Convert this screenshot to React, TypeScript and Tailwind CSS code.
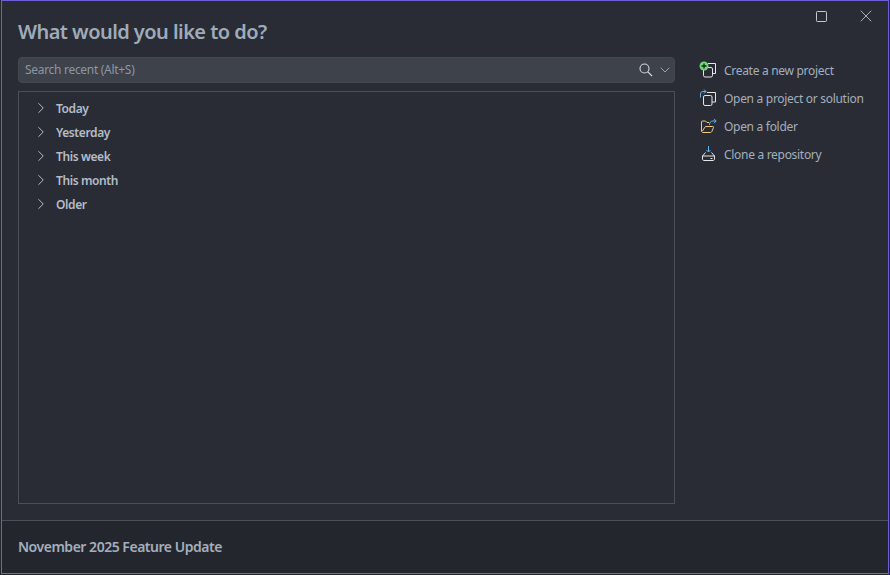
import React from "react";
import { ChevronRight, ChevronDown, X } from "lucide-react";

const groups = ["Today", "Yesterday", "This week", "This month", "Older"];

function NewIcon() {
  return (
    <svg width="20" height="20" viewBox="0 0 20 20" fill="none">
      <path d="M9 2.500h7.500v10H13.500" stroke="#e4e6e8" />
      <rect x="4.500" y="6.500" width="9" height="9.500" rx="1.500" stroke="#e4e6e8" />
      <circle cx="5" cy="5" r="4.500" fill="#6fd97a" />
      <path d="M5 2.500v5M2.500 5h5" stroke="#14241a" strokeWidth="1.300" />
    </svg>
  );
}
function OpenIcon() {
  return (
    <svg width="20" height="20" viewBox="0 0 20 20" fill="none">
      <path d="M8 3.500h8.500v9.500H13" stroke="#e4e6e8" />
      <rect x="4.500" y="6.500" width="8.500" height="10" rx="1.500" stroke="#e4e6e8" />
      <path d="M1.500 8.500V5c0-1.500 1-2.500 2.500-2.500h3M5 .5l2 2-2 2" stroke="#5fb4ee" />
    </svg>
  );
}
function FolderIcon() {
  return (
    <svg width="20" height="20" viewBox="0 0 20 20" fill="none">
      <path d="M2.500 14V5c0-.6.400-1 1-1h3l1.500 1.500h2" stroke="#f2cc7f" />
      <path d="M2.500 14c0 .6.400 1.500 1.500 1.500h7.500c.6 0 1-.3 1.300-.9l1.700-4.100c.2-.6-.1-1-.700-1H7c-.6 0-.9.300-1.200.8L3.500 14" stroke="#f2cc7f" />
      <path d="M10.500 8C10.500 5 12 4 14 4h3M15 1.800 17.200 4 15 6.200" stroke="#5fb4ee" />
    </svg>
  );
}
function CloneIcon() {
  return (
    <svg width="20" height="20" viewBox="0 0 20 20" fill="none">
      <path d="M9.500 1v6M7.500 5l2 2 2-2" stroke="#5fb4ee" />
      <path d="M6.500 7.500 3.500 11v3c0 .8.500 1.500 1.500 1.500h9c1 0 1.500-.7 1.500-1.500v-3l-3-3.500" stroke="#e4e6e8" />
      <path d="M3.500 11h12M11.500 13.500h2" stroke="#e4e6e8" />
    </svg>
  );
}
function SearchIcon() {
  return (
    <svg width="14" height="14" viewBox="0 0 14 14" fill="none" className="text-[#d5d8dc]">
      <circle cx="5.500" cy="5.500" r="4.500" stroke="currentColor" strokeWidth="1.100" />
      <path d="M8.800 8.800 13 13" stroke="currentColor" strokeWidth="1.200" />
    </svg>
  );
}

const actions = [
  { label: "Create a new project", icon: <NewIcon /> },
  { label: "Open a project or solution", icon: <OpenIcon /> },
  { label: "Open a folder", icon: <FolderIcon /> },
  { label: "Clone a repository", icon: <CloneIcon /> },
];

export default function App() {
  return (
    <div className="w-[890px] h-[575px] bg-[#23262d] overflow-hidden" style={{ fontFamily: '"Noto Sans", sans-serif' }}>
      <div className="w-[888px] h-[574px] ml-px flex flex-col border border-[#6e5ed8] bg-[#292c35]">
        <div className="flex-1 min-h-0 flex flex-col pl-[16px] pr-[13px]">
          <div className="h-[56px] flex items-start justify-between shrink-0">
            <h1 className="mt-[17px] text-[20px] leading-[27px] font-semibold tracking-[-0.55px] text-[#9fabba]">What would you like to do?</h1>
            <div className="flex items-center gap-[29px] mt-[5px] mr-[-1px] text-[#c4c8cd]">
              <svg width="11" height="11" viewBox="0 0 11 11" fill="none">
                <rect x="0.500" y="0.500" width="10" height="10" rx="0.800" stroke="currentColor" />
              </svg>
              <X size={20} strokeWidth={1} />
            </div>
          </div>
          <div className="flex-1 min-h-0 flex">
            <div className="w-[657px] flex flex-col">
              <div className="h-[26px] shrink-0 flex items-center rounded-[4px] bg-[#3e424b] pl-[6px] pr-[1px] border border-[#43474f]">
                <span className="flex-1 text-[12px] tracking-[-0.3px] text-[#8d96a2]">Search recent (Alt+S)</span>
                <SearchIcon />
                <ChevronDown size={16} strokeWidth={1.300} className="ml-[4px] text-[#aeb3ba]" />
              </div>
              <div className="mt-[8px] mb-[16px] flex-1 min-h-0 border border-[#4c4f57] pt-[5px] pl-[13px]">
                {groups.map((g) => (
                  <div key={g} className="h-[24px] flex items-center">
                    <ChevronRight size={18} strokeWidth={1.200} className="text-[#c8ccd1] mb-[2px]" />
                    <span className="ml-[6px] text-[12px] font-semibold tracking-[-0.4px] text-[#b4bcc7]">{g}</span>
                  </div>
                ))}
              </div>
            </div>
            <div className="ml-[24px] flex flex-col">
              {actions.map((a) => (
                <div key={a.label} className="h-[28px] flex items-center gap-[5px]">
                  {a.icon}
                  <span className="text-[12px] tracking-[-0.3px] text-[#a3afbd]">{a.label}</span>
                </div>
              ))}
            </div>
          </div>
        </div>
        <div className="h-[53px] shrink-0 border-t border-[#4c4f57] bg-[#23262d] flex items-center pl-[16px] pb-[1px]">
          <span className="text-[14px] font-semibold tracking-[-0.48px] text-[#a3afbd]">November 2025 Feature Update</span>
        </div>
      </div>
    </div>
  );
}
